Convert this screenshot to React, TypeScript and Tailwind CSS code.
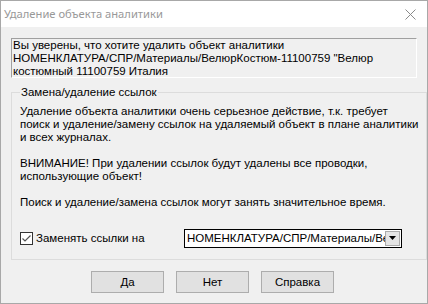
import React, { useState } from 'react';

export default function App() {
  const [replace, setReplace] = useState(true);

  return (
    <div className="w-[428px] h-[304px] bg-[#f0f0f0] border border-[#a8a8a8] flex flex-col overflow-hidden text-black" style={{ fontFamily: '"Liberation Sans", Arial, sans-serif' }}>
      {/* title bar */}
      <div className="h-[26px] bg-white flex items-center justify-between pl-[3px] pr-[11px] shrink-0">
        <span className="text-[11.2px] text-[#999999]" style={{ fontFamily: '"Noto Sans", "Open Sans", sans-serif' }}>
          Удаление объекта аналитики
        </span>
        <svg width="11" height="11" viewBox="0 0 11 11" className="mt-[1px]">
          <path d="M0.5 0.5 L10.5 10.5 M10.5 0.5 L0.5 10.5" stroke="#8a8a8a" strokeWidth="1" fill="none" />
        </svg>
      </div>

      {/* body */}
      <div className="flex flex-col px-[10px] pt-[11px] text-[11.5px] leading-[13px] whitespace-nowrap">
        <div className="h-[40px] border-t border-l border-[#a0a0a0] border-r-white border-b-white border-r border-b pl-[1px] overflow-hidden">
          <div>Вы уверены, что хотите удалить объект аналитики</div>
          <div>НОМЕНКЛАТУРА/СПР/Материалы/ВелюрКостюм-11100759 "Велюр</div>
          <div>костюмный 11100759 Италия</div>
        </div>

        <fieldset className="mt-[8px] border border-[#dcdcdc] px-[8px] pb-[12px] w-[405px]">
          <legend className="px-[1px]">Замена/удаление ссылок</legend>
          <div className="pt-[6px]">
            <p>Удаление объекта аналитики очень серьезное действие, т.к. требует</p>
            <p>поиск и удаление/замену ссылок на удаляемый объект в плане аналитики</p>
            <p>и всех журналах.</p>
            <p className="mt-[13px]">ВНИМАНИЕ! При удалении ссылок будут удалены все проводки,</p>
            <p>использующие объект!</p>
            <p className="mt-[13px]">Поиск и удаление/замена ссылок могут занять значительное время.</p>
          </div>

          <div className="mt-[20px] flex items-center h-[18px]">
            <label className="flex items-center gap-[3px] w-[164px] cursor-default">
              <span
                onClick={() => setReplace(!replace)}
                className="w-[13px] h-[13px] bg-white border border-[#333333] flex items-center justify-center shrink-0"
              >
                {replace && (
                  <svg width="11" height="11" viewBox="0 0 11 11">
                    <path d="M1.5 5.5 L4 8 L9.5 2.5" stroke="#555555" strokeWidth="1.2" fill="none" />
                  </svg>
                )}
              </span>
              <span>Заменять ссылки на</span>
            </label>
            <div className="w-[218px] h-[19px] border border-black bg-white flex items-center pl-[2px] pr-[1px]">
              <span className="flex-1 overflow-hidden">НОМЕНКЛАТУРА/СПР/Материалы/ВелюрКостюм-11100759</span>
              <span className="w-[15px] h-[15px] bg-[#e5e5e5] border border-[#acacac] flex items-center justify-center shrink-0">
                <svg width="7" height="4" viewBox="0 0 7 4">
                  <path d="M0 0 L7 0 L3.5 4 Z" fill="#000" />
                </svg>
              </span>
            </div>
          </div>
        </fieldset>

        <div className="mt-[11px] ml-[80px] flex gap-[12px]">
          {['Да', 'Нет', 'Справка'].map((t) => (
            <button key={t} className="w-[73px] h-[22px] bg-[#e1e1e1] border border-[#adadad] text-[11.5px] leading-[13px]">
              {t}
            </button>
          ))}
        </div>
      </div>
    </div>
  );
}
